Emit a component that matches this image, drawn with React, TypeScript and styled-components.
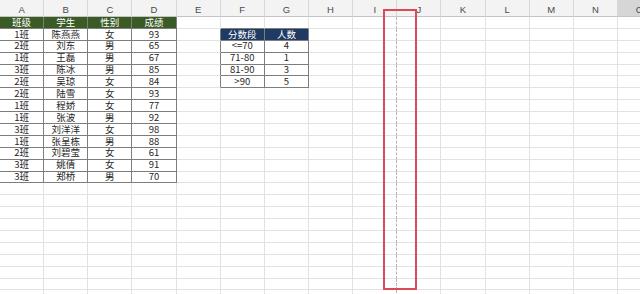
import React from "react";
import styled, { createGlobalStyle, css } from "styled-components";

const Global = createGlobalStyle`
  html, body { margin: 0; padding: 0; background: #ffffff; }
  body { font-family: "Noto Sans CJK SC", "Noto Sans", sans-serif; }
`;

const COLS = ["A","B","C","D","E","F","G","H","I","J","K","L","M","N","O"];
const ROWS = 25;

const main: string[][] = [
  ["班级","学生","性别","成绩"],
  ["1班","陈燕燕","女","93"],
  ["2班","刘东","男","65"],
  ["1班","王磊","男","67"],
  ["3班","陈冰","男","85"],
  ["2班","吴琼","女","84"],
  ["2班","陆雪","女","93"],
  ["1班","程娇","女","77"],
  ["1班","张波","男","92"],
  ["3班","刘洋洋","女","98"],
  ["1班","张呈栋","男","88"],
  ["2班","刘碧莹","女","61"],
  ["3班","姚倩","女","91"],
  ["3班","郑桥","男","70"],
];

const bands: string[][] = [
  ["分数段","人数"],
  ["<=70","4"],
  ["71-80","1"],
  ["81-90","3"],
  [">90","5"],
];

type Kind = "plain" | "green" | "blue" | "body";

function cellAt(r: number, c: number): { kind: Kind; text: string } | null {
  if (r >= 1 && r <= 14 && c >= 0 && c <= 3) {
    return { kind: r === 1 ? "green" : "body", text: main[r - 1][c] };
  }
  if (r >= 2 && r <= 6 && c >= 5 && c <= 6) {
    return { kind: r === 2 ? "blue" : "body", text: bands[r - 2][c - 5] };
  }
  return null;
}

const Frame = styled.div`
  position: relative;
  width: 640px;
  height: 294px;
  overflow: hidden;
  background: #ffffff;
`;

const Sheet = styled.div`
  display: grid;
  grid-template-columns: repeat(15, 44.15px);
  grid-template-rows: 17px repeat(${ROWS}, 11.9px);
`;

const ColHead = styled.div<{ $selected?: boolean }>`
  box-sizing: border-box;
  display: flex;
  align-items: center;
  justify-content: center;
  padding-top: 3px;
  font-family: "Liberation Sans", "Noto Sans", sans-serif;
  font-size: 9.5px;
  color: #4a4a4a;
  background: ${(p) => (p.$selected ? "#d6d6d6" : "#f3f3f3")};
  border-right: 1px solid #d7d7d7;
  border-bottom: 1px solid #c4c4c4;
`;

const Cell = styled.div<{
  $kind: Kind;
  $darkRight: boolean;
  $darkBottom: boolean;
  $dashedRight: boolean;
}>`
  box-sizing: border-box;
  display: flex;
  align-items: center;
  justify-content: center;
  font-size: 9.5px;
  line-height: 1;
  white-space: nowrap;
  color: #262626;
  border-right: 1px solid #e2e2e2;
  border-bottom: 1px solid #e2e2e2;
  ${(p) => p.$dashedRight && css`border-right: 1px dashed #b4b4b4;`}
  ${(p) => p.$darkRight && css`border-right: 1px solid #7d7d7d;`}
  ${(p) => p.$darkBottom && css`border-bottom: 1px solid #7d7d7d;`}
  ${(p) =>
    p.$kind === "green" &&
    css`
      background: #3a5a26;
      color: #ffffff;
    `}
  ${(p) =>
    p.$kind === "blue" &&
    css`
      background: #1f3a63;
      color: #ffffff;
    `}
`;

const Highlight = styled.div`
  position: absolute;
  left: 383px;
  top: 9px;
  width: 34px;
  height: 281px;
  box-sizing: border-box;
  border: 2px solid #d84b57;
  pointer-events: none;
`;

export default function App() {
  const cells: React.ReactNode[] = [];
  for (let r = 1; r <= ROWS; r++) {
    for (let c = 0; c < COLS.length; c++) {
      const here = cellAt(r, c);
      const darkRight = !!here || !!cellAt(r, c + 1);
      const darkBottom = !!here || !!cellAt(r + 1, c);
      cells.push(
        <Cell
          key={`${r}-${c}`}
          $kind={here ? here.kind : "plain"}
          $darkRight={darkRight}
          $darkBottom={darkBottom}
          $dashedRight={c === 8}
        >
          {here ? here.text : null}
        </Cell>
      );
    }
  }
  return (
    <>
      <Global />
      <Frame>
        <Sheet>
          {COLS.map((l) => (
            <ColHead key={l} $selected={l === "O"}>
              {l}
            </ColHead>
          ))}
          {cells}
        </Sheet>
        <Highlight />
      </Frame>
    </>
  );
}
